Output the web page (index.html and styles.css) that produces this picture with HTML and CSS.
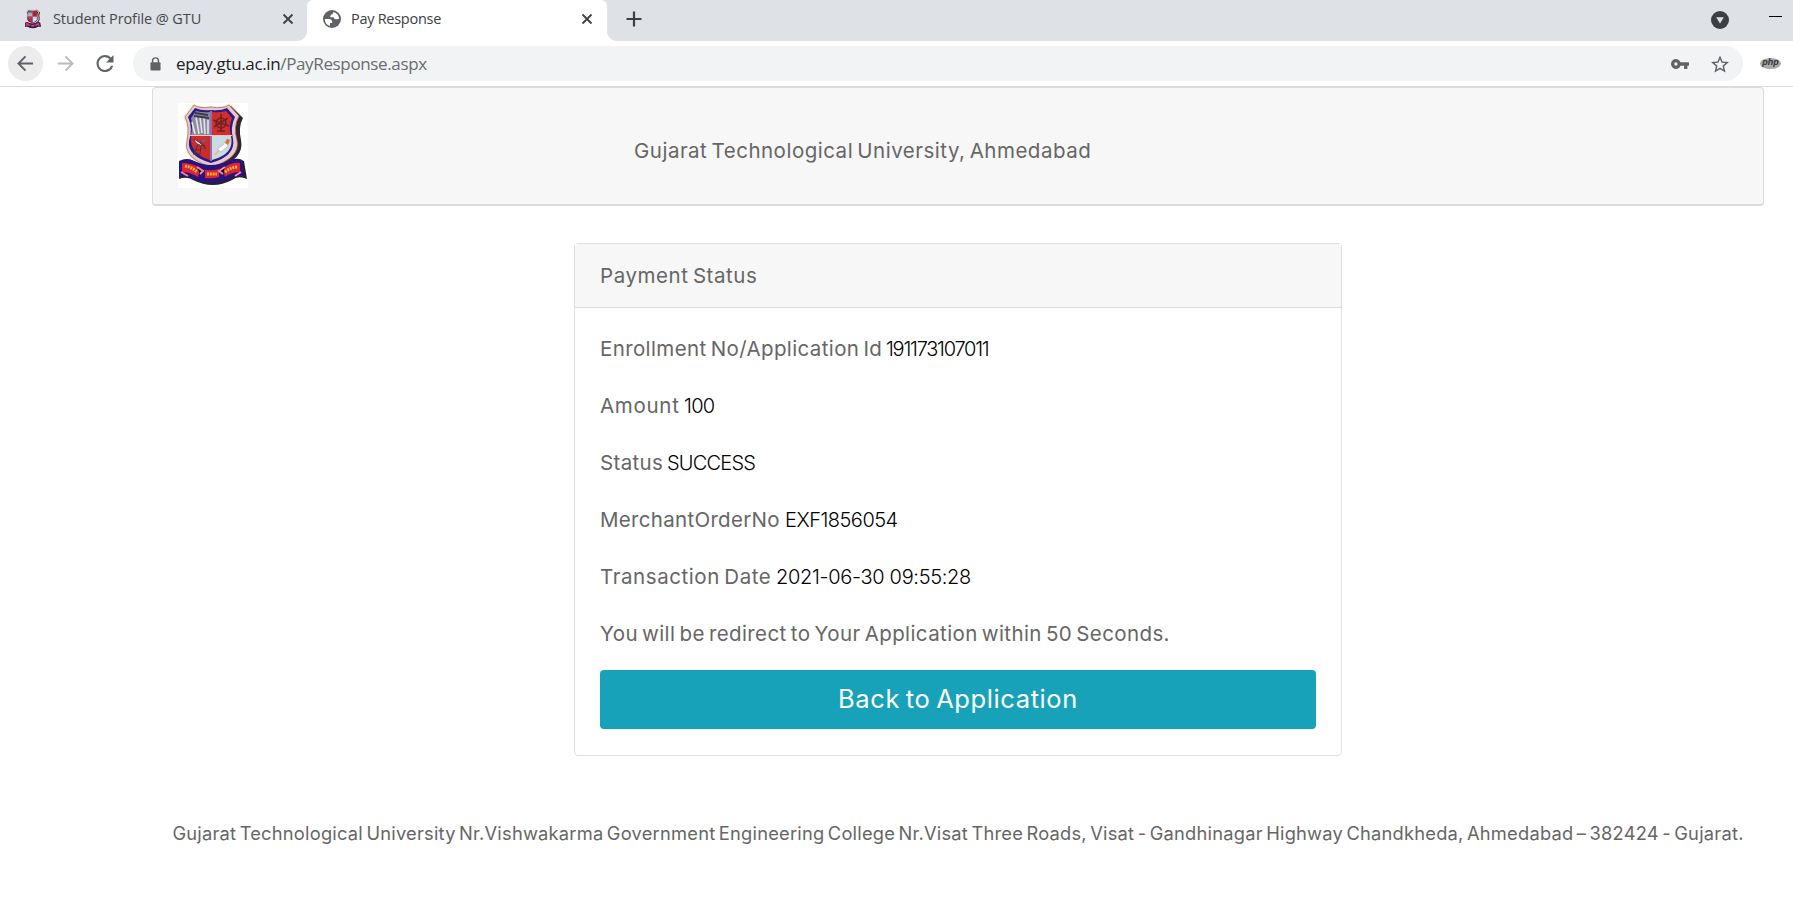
FILE: index.html
```html
<!DOCTYPE html>
<html lang="en">
<head>
<meta charset="utf-8">
<title>Pay Response</title>
<link rel="stylesheet" href="styles.css">
</head>
<body>
<svg class="defs" width="0" height="0" aria-hidden="true">
  <symbol id="crest" viewBox="0 0 70 85">
    <path d="M15 0Q20 5 33 3Q46 5 52 0L64 13Q57 23 61 37Q67 56 34 65Q3 56 8 38Q11 23 5 14Z" fill="#f4efc4"/>
    <path d="M19 4Q35 8 53 3L65 15Q60 24 63 37Q67 57 37 65Z" fill="#30262c"/>
    <path d="M16 2Q22 6 33 4Q45 6 51 2L61 13Q55 24 59 37Q63 55 33 64Q5 55 9 38Q12 23 7 14Z" fill="#e8c9cf" stroke="#a96a68" stroke-width=".8"/>
    <path d="M17 5Q24 8 33 7Q43 8 49 5L57 14Q52 24 55 36Q58 53 33 60Q9 53 11 38Q15 25 10 14Z" fill="#2b1b86"/>
    <path d="M18 8Q25 10 32 9V32H13Q15 23 13 15Z" fill="#8d8b9c"/>
    <path d="M34 9Q42 10 48 8L54 15Q50 24 53 32H34Z" fill="#d52d2d"/>
    <path d="M13 33H32V57Q14 51 13 38Z" fill="#d02b2b"/>
    <path d="M34 33H53Q57 51 34 57Z" fill="#cbdbe2"/>
    <path d="M14 19L17 31M18 14L21 31M22 14L24 30M26 15L27 31M30 17V31" stroke="#e6e3eb" stroke-width="1.6"/>
    <path d="M17 10L30 12M16 13L31 15" stroke="#3b394c" stroke-width="1.8"/>
    <path d="M33 8V58M12 32.500H54" stroke="#f3c7c7" stroke-width="1"/>
    <g fill="none" stroke="#6d2420" stroke-width="1.500"><circle cx="43" cy="20" r="5"/><path d="M43 11V29M35 17L51 23M36 24L50 15M39 28H47"/></g>
    <path d="M16 36Q17 42 27 43Z" fill="#e9e5e8" stroke="#3b2832" stroke-width=".7"/>
    <path d="M20 42L16 51H22L23 43M22 39L28 46M17 47H23" stroke="#54313c" fill="none" stroke-width="1.200"/>
    <path d="M24 39L27 37" stroke="#2878bd" stroke-width="2"/>
    <path d="M37 52L41 47" stroke="#eeb789" stroke-width="2"/>
    <path d="M39 46L45 42L49 36L52 37L49 44L43 49Z" fill="#fbfbfb" stroke="#9f9ca4" stroke-width=".5"/>
    <path d="M47 40L49 36L52 37L50 42Z" fill="#d97231"/>
    <path d="M2 59Q9 54 16 58Q34 67 51 58Q59 54 66 58L69 76Q60 72 54 77Q35 87 15 77Q9 73 1 76Z" fill="#272026"/>
    <path d="M1 58Q9 54 16 58Q33 66 50 58Q58 54 64 57L66 74Q58 71 52 76Q34 84 15 76Q9 72 1 74Z" fill="#2a137e"/>
    <path d="M4 60Q14 60 22 65L20 74Q12 69 4 69Z" fill="#dc2638"/>
    <path d="M27 67Q34 68 41 66V74Q34 76 27 75Z" fill="#e12330"/>
    <path d="M45 65Q54 59 62 60V69Q53 69 47 74Z" fill="#dc2638"/>
    <path d="M19 64L25 68L22 71M47 64L41 68L45 71M3 69L10 73M63 69L57 73" stroke="#f08aa0" stroke-width="2"/>
    <path d="M7 63Q14 64 19 69M29 71H39M47 69Q53 64 60 64" fill="none" stroke="#f0b338" stroke-width="3" stroke-dasharray="2 .8"/>
  </symbol>
</svg>

<header class="browser">
  <div class="tabstrip">
    <div class="tab tab-idle">
      <svg class="favicon"><use href="#crest"/></svg>
      <span class="tab-title student">Student Profile @ GTU</span>
      <svg class="close" viewBox="0 0 12 12"><path d="M1.500 1.500L10.500 10.500M10.500 1.500L1.500 10.500"/></svg>
    </div>
    <div class="tab tab-active">
      <svg class="globe" viewBox="0 0 18 18"><circle cx="9" cy="9" r="9"/><path fill="#fff" d="M1.800 9H6Q9.300 9.200 9.200 13H7V16Q2 14.500 1.800 9ZM10.500 2Q15.500 3.500 16.200 8.500Q15 9.500 13 9.300Q10.800 9.200 10.600 7.200H7.300Q7 4.500 9.700 4.200Q9.600 2.800 10.500 2Z"/></svg>
      <span class="tab-title pay">Pay Response</span>
      <svg class="close" viewBox="0 0 12 12"><path d="M1.500 1.500L10.500 10.500M10.500 1.500L1.500 10.500"/></svg>
    </div>
    <svg class="plus" viewBox="0 0 16 16"><path d="M8 .5V15.500M.5 8H15.500"/></svg>
    <svg class="search-tabs" viewBox="0 0 18 18"><circle cx="9" cy="9" r="9" fill="#3c4043"/><path d="M5.200 6.200H12.800L9 12.500Z" fill="#dee1e6"/></svg>
    <span class="minimize"></span>
  </div>
  <div class="toolbar">
    <span class="back"><svg viewBox="0 0 18 18"><path d="M17 9H2M9 1.500L1.500 9L9 16.500"/></svg></span>
    <svg class="forward" viewBox="0 0 18 18"><path d="M1 9H16M9 1.500L16.500 9L9 16.500"/></svg>
    <svg class="reload" viewBox="4 4 16 16"><path d="M17.650 6.350A7.960 7.960 0 0 0 12 4a8 8 0 1 0 7.730 10h-2.080A6 6 0 1 1 12 6c1.660 0 3.140.690 4.220 1.780L13 11h7V4z"/></svg>
    <div class="omnibox">
      <svg class="lock" viewBox="0 0 12 15"><path d="M2.800 6V4a3.200 3.200 0 0 1 6.400 0v2" fill="none" stroke="#5f6368" stroke-width="1.600"/><rect x=".5" y="5.500" width="11" height="9" rx="1.300" fill="#5f6368"/></svg>
      <span class="url"><b>epay.gtu.ac.in</b>/PayResponse.aspx</span>
      <svg class="key" viewBox="1 6 22 12"><path d="M12.650 10A6 6 0 1 0 12.650 14H17v4h4v-4h2v-4zM7 14a2 2 0 1 1 0-4 2 2 0 0 1 0 4z"/></svg>
      <svg class="star" viewBox="2 2 20 19"><path d="M22 9.240l-7.190-.620L12 2 9.190 8.630 2 9.240l5.460 4.730L5.820 21 12 17.270 18.180 21l-1.630-7.030zM12 15.400l-3.760 2.270 1-4.280-3.320-2.880 4.380-.380L12 6.100l1.710 4.040 4.380.380-3.320 2.880 1 4.280z"/></svg>
    </div>
    <span class="php">php</span>
  </div>
</header>

<main class="page">
  <nav class="navbar">
    <svg class="logo"><use href="#crest"/></svg>
    <span class="t uni">Gujarat Technological University, Ahmedabad</span>
  </nav>
  <section class="card">
    <h1 class="card-header"><span class="t heading">Payment Status</span></h1>
    <div class="card-body">
      <p class="row"><span class="t l1">Enrollment No/Application Id</span><span class="t value v1">191173107011</span></p>
      <p class="row"><span class="t l2">Amount</span><span class="t value v2">100</span></p>
      <p class="row"><span class="t l3">Status</span><span class="t value v3">SUCCESS</span></p>
      <p class="row"><span class="t l4">MerchantOrderNo</span><span class="t value v4">EXF1856054</span></p>
      <p class="row"><span class="t l5">Transaction Date</span><span class="t value v5">2021-06-30 09:55:28</span></p>
      <p class="row"><span class="t l6">You will be redirect to Your Application within 50 Seconds.</span></p>
      <button class="btn"><span class="t back-text">Back to Application</span></button>
    </div>
  </section>
  <footer class="footer"><span class="t address">Gujarat Technological University Nr.Vishwakarma Government Engineering College Nr.Visat Three Roads, Visat - Gandhinagar Highway Chandkheda, Ahmedabad – 382424 - Gujarat.</span></footer>
</main>
</body>
</html>
```
FILE: styles.css
```css
* { box-sizing: border-box; }
body { margin: 0; width: 1793px; height: 909px; overflow: hidden; background: #fff; color: #666; font: 400 20.5px/30px Inter, "Open Sans", sans-serif; }
svg { display: block; flex: none; }
.defs { position: absolute; }
.t { display: inline-block; white-space: nowrap; word-spacing: -2px; }

/* Browser chrome */
.browser { height: 87px; border-bottom: 1px solid #dadbdd; font-family: "Open Sans", "Noto Sans", sans-serif; font-weight: 400; }
.tabstrip { display: flex; height: 41px; background: #dee1e6; }
.tab { display: flex; align-items: center; height: 41px; padding-bottom: 3px; font-size: 14.5px; line-height: 20px; }
.tab-idle { width: 307px; padding-left: 23px; padding-right: 13px; background: radial-gradient(circle at 0 0, #dee1e6 9.500px, #fff 10.500px) right bottom / 10px 10px no-repeat, #dee1e6; color: #45484c; }
.tab-active { width: 300px; padding-left: 16px; padding-right: 14px; background: #fff; border-radius: 6px 6px 0 0; color: #3c4043; }
.favicon { width: 20px; height: 20px; }
.globe { width: 18px; height: 18px; fill: #5f6368; }
.tab-title { white-space: nowrap; }
.student { margin-left: 10px; letter-spacing: -.1px; }
.pay { margin-left: 10px; letter-spacing: -.28px; }
.close { width: 12px; height: 12px; margin-left: auto; fill: none; stroke: #3c4043; stroke-width: 1.800; }
.plus { width: 49px; height: 41px; padding: 11px 14px 14px 19px; background: radial-gradient(circle at 100% 0, #dee1e6 9.500px, #fff 10.500px) left bottom / 10px 10px no-repeat; fill: none; stroke: #3c4043; stroke-width: 2.200; }
.search-tabs { width: 18px; height: 18px; margin: 11px 40px 0 auto; }
.minimize { width: 13px; height: 1px; margin: 16px 11px 0 0; background: #000; }
.toolbar { display: flex; align-items: center; height: 45px; padding: 0 11px 0 8px; }
.back { display: flex; align-items: center; justify-content: center; width: 35px; height: 35px; border-radius: 50%; background: #ececed; }
.back svg, .forward { width: 17px; height: 17px; fill: none; stroke: #5f6368; stroke-width: 2; }
.forward { margin-left: 14px; stroke: #babcbe; }
.reload { width: 18px; height: 17px; margin-left: 22px; fill: #5f6368; }
.omnibox { display: flex; align-items: center; width: 1610px; height: 35px; margin-left: 19px; padding: 0 14px 0 17px; border-radius: 18px; background: #f1f3f4; }
.lock { width: 11px; height: 14px; }
.url { margin-left: 15px; font-size: 17px; line-height: 24px; letter-spacing: -.36px; color: #6a6d71; }
.url b { font-weight: 400; color: #202124; }
.key { width: 18px; height: 10px; margin-left: auto; fill: #5f6368; }
.star { width: 18px; height: 18px; margin-left: 22px; fill: #5f6368; }
.php { width: 21px; height: 11px; margin-left: 17px; border-radius: 50%; background: #aaa; color: #333; font: italic 700 9px/9px "Liberation Sans", sans-serif; text-align: center; }

/* Payment page */
.page { padding-left: 152px; }
.navbar { display: flex; align-items: flex-start; width: 1612px; height: 119px; padding: 15px 25px; border: 1px solid #dcdcdc; border-bottom: 2px solid #dadada; border-radius: 4px; background: #f7f7f7; }
.logo { width: 70px; height: 85px; background: #fff; }
.uni { margin: 33px 0 0 386px; letter-spacing: .5px; }
.card { width: 768px; height: 513px; margin: 37px 0 0 422px; border: 1px solid #dfdfdf; border-radius: 4px; }
.card-header { height: 64px; margin: 0; padding: 17px 25px 0; border-bottom: 1px solid #dcdcdc; background: #f7f7f7; font: inherit; }
.heading { letter-spacing: .57px; }
.card-body { padding: 26px 25px; }
.row { display: flex; height: 30px; margin: 0 0 27px; }
.row:nth-child(6) { margin-bottom: 21px; }
.value { margin-left: 5px; color: #000; font-size: 20px; font-weight: 300; word-spacing: 0; }
.l1 { width: 281px; letter-spacing: .38px; }
.l2 { width: 79px; letter-spacing: .7px; }
.l3 { width: 62px; letter-spacing: .35px; }
.l4 { width: 180px; letter-spacing: .3px; }
.l5 { width: 171px; letter-spacing: .58px; }
.l6 { letter-spacing: .39px; }
.v1 { letter-spacing: -1.25px; }
.v2 { letter-spacing: -.7px; }
.v3 { letter-spacing: -.8px; }
.v4 { letter-spacing: -.5px; }
.v5 { letter-spacing: -.32px; }
.btn { display: block; width: 716px; height: 59px; padding: 0; border: 0; border-radius: 4px; background: #18a2b9; color: #fff; font: 400 25.5px/38px Inter, sans-serif; text-align: center; }
.back-text { position: relative; top: -1px; letter-spacing: .6px; }
.footer { display: flex; justify-content: center; width: 1612px; margin-top: 62px; font-size: 18.3px; }
.address { letter-spacing: .23px; }
```
